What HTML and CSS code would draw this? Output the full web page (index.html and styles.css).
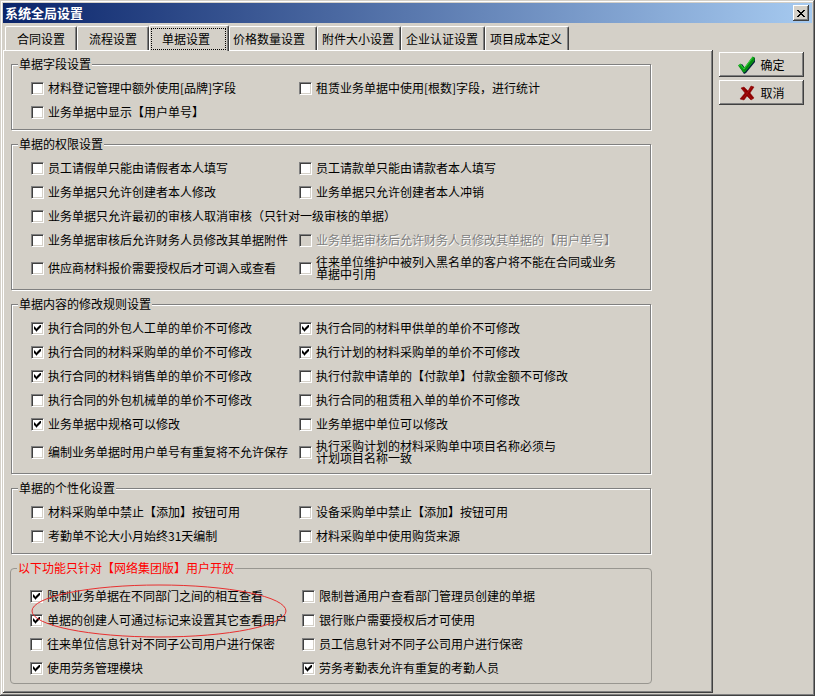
FILE: index.html
```html
<!DOCTYPE html>
<html lang="zh-CN">
<head>
<meta charset="utf-8">
<title>系统全局设置</title>
<link rel="stylesheet" href="styles.css">
</head>
<body>
<main class="window">
  <header class="titlebar">
    <h1 class="title">系统全局设置</h1>
    <button class="close" type="button" aria-label="关闭">
      <svg width="8" height="7" viewBox="0 0 8 7" shape-rendering="crispEdges"><path d="M0 0h2v1h1v1h2v-1h1v-1h2v1h-1v1h-1v1h-1v1h1v1h1v1h1v1h-2v-1h-1v-1h-2v1h-1v1h-2v-1h1v-1h1v-1h1v-1h-1v-1h-1v-1h-1z"/></svg>
    </button>
  </header>
  <form class="content">
    <div class="pages">
      <div class="tabs" role="tablist">
        <button class="tab tab-wide" type="button" role="tab">合同设置</button>
        <button class="tab tab-wide" type="button" role="tab">流程设置</button>
        <button class="tab tab-selected" type="button" role="tab" aria-selected="true"><span class="focus">单据设置</span></button>
        <button class="tab tab-after" type="button" role="tab">价格数量设置</button>
        <button class="tab" type="button" role="tab">附件大小设置</button>
        <button class="tab" type="button" role="tab">企业认证设置</button>
        <button class="tab" type="button" role="tab">项目成本定义</button>
      </div>
      <div class="panel" role="tabpanel">
        <fieldset class="group">
          <legend>单据字段设置</legend>
          <div class="options">
            <label class="option"><input type="checkbox"><span>材料登记管理中额外使用[品牌]字段</span></label>
            <label class="option"><input type="checkbox"><span>租赁业务单据中使用[根数]字段，进行统计</span></label>
            <label class="option"><input type="checkbox"><span>业务单据中显示【用户单号】</span></label>
          </div>
        </fieldset>
        <fieldset class="group">
          <legend>单据的权限设置</legend>
          <div class="options">
            <label class="option"><input type="checkbox"><span>员工请假单只能由请假者本人填写</span></label>
            <label class="option"><input type="checkbox"><span>员工请款单只能由请款者本人填写</span></label>
            <label class="option"><input type="checkbox"><span>业务单据只允许创建者本人修改</span></label>
            <label class="option"><input type="checkbox"><span>业务单据只允许创建者本人冲销</span></label>
            <label class="option option-full"><input type="checkbox"><span>业务单据只允许最初的审核人取消审核（只针对一级审核的单据）</span></label>
            <label class="option"><input type="checkbox"><span>业务单据审核后允许财务人员修改其单据附件</span></label>
            <label class="option option-off"><input type="checkbox" disabled><span>业务单据审核后允许财务人员修改其单据的【用户单号】</span></label>
            <label class="option option-tall"><input type="checkbox"><span>供应商材料报价需要授权后才可调入或查看</span></label>
            <label class="option option-tall"><input type="checkbox"><span>往来单位维护中被列入黑名单的客户将不能在合同或业务<br>单据中引用</span></label>
          </div>
        </fieldset>
        <fieldset class="group">
          <legend>单据内容的修改规则设置</legend>
          <div class="options">
            <label class="option"><input type="checkbox" checked><span>执行合同的外包人工单的单价不可修改</span></label>
            <label class="option"><input type="checkbox" checked><span>执行合同的材料甲供单的单价不可修改</span></label>
            <label class="option"><input type="checkbox" checked><span>执行合同的材料采购单的单价不可修改</span></label>
            <label class="option"><input type="checkbox" checked><span>执行计划的材料采购单的单价不可修改</span></label>
            <label class="option"><input type="checkbox" checked><span>执行合同的材料销售单的单价不可修改</span></label>
            <label class="option"><input type="checkbox"><span>执行付款申请单的【付款单】付款金额不可修改</span></label>
            <label class="option"><input type="checkbox"><span>执行合同的外包机械单的单价不可修改</span></label>
            <label class="option"><input type="checkbox"><span>执行合同的租赁租入单的单价不可修改</span></label>
            <label class="option"><input type="checkbox" checked><span>业务单据中规格可以修改</span></label>
            <label class="option"><input type="checkbox"><span>业务单据中单位可以修改</span></label>
            <label class="option option-tall"><input type="checkbox"><span>编制业务单据时用户单号有重复将不允许保存</span></label>
            <label class="option option-tall"><input type="checkbox"><span>执行采购计划的材料采购单中项目名称必须与<br>计划项目名称一致</span></label>
          </div>
        </fieldset>
        <fieldset class="group">
          <legend>单据的个性化设置</legend>
          <div class="options">
            <label class="option"><input type="checkbox"><span>材料采购单中禁止【添加】按钮可用</span></label>
            <label class="option"><input type="checkbox"><span>设备采购单中禁止【添加】按钮可用</span></label>
            <label class="option"><input type="checkbox"><span>考勤单不论大小月始终31天编制</span></label>
            <label class="option"><input type="checkbox"><span>材料采购单中使用购货来源</span></label>
          </div>
        </fieldset>
        <fieldset class="group group-edition">
          <legend>以下功能只针对【网络集团版】用户开放</legend>
          <div class="options">
            <label class="option"><input type="checkbox" checked><span>限制业务单据在不同部门之间的相互查看</span></label>
            <label class="option"><input type="checkbox"><span>限制普通用户查看部门管理员创建的单据</span></label>
            <label class="option"><input type="checkbox" checked><span>单据的创建人可通过标记来设置其它查看用户</span></label>
            <label class="option"><input type="checkbox"><span>银行账户需要授权后才可使用</span></label>
            <label class="option"><input type="checkbox"><span>往来单位信息针对不同子公司用户进行保密</span></label>
            <label class="option"><input type="checkbox"><span>员工信息针对不同子公司用户进行保密</span></label>
            <label class="option"><input type="checkbox" checked><span>使用劳务管理模块</span></label>
            <label class="option"><input type="checkbox" checked><span>劳务考勤表允许有重复的考勤人员</span></label>
          </div>
          <svg class="mark" width="256" height="54" viewBox="0 0 256 54" aria-hidden="true"><ellipse cx="128" cy="27" rx="127" ry="26"/></svg>
        </fieldset>
      </div>
    </div>
    <div class="actions">
      <button class="action" type="button">
        <svg width="18" height="18" viewBox="0 0 18 18"><path d="M1 10l3-2 3 4L15 1l2 1v4L8 17l-2 1z" fill="#06243a"/><path d="M0 9.500l2.500-2 3.500 4.500L14.500 0.500l2 1v3L7 16l-1.500 0.500z" fill="#0a9c14"/><path d="M1 9.500l1.500-1 3.500 4.500L14.500 1.500" fill="none" stroke="#35d03c"/><path d="M6.500 14.500L15.500 3.500" fill="none" stroke="#067a10"/></svg>
        <span>确定</span>
      </button>
      <button class="action" type="button">
        <svg width="18" height="18" viewBox="0 0 18 18"><path d="M3 4l3-1 4 4 3-5 3 1-4 6 4 5-3 2-4-4-3 4-4-1 5-6z" fill="#8c0000" stroke="#8c0000" stroke-width="0.500"/><path d="M4 4.500l6.500 6.500 3.500 4M14 3L5 14.500" fill="none" stroke="#a81010"/></svg>
        <span>取消</span>
      </button>
    </div>
  </form>
</main>
</body>
</html>
```
FILE: styles.css
```css
:root {
  --face: #d4d0c8;
  --shade: #808080;
  --dark: #404040;
}

* {
  box-sizing: border-box;
}

body {
  margin: 0;
  background: var(--face);
  color: #000;
  font: 12px/14px "Noto Sans CJK SC", sans-serif;
}

button {
  padding: 0;
  border: 0;
  background: var(--face);
  color: inherit;
  font: inherit;
}

.window {
  display: flex;
  flex-direction: column;
  min-height: 100vh;
  padding: 3px;
  background: var(--face);
  box-shadow: inset -1px -1px var(--dark), inset 1px 1px var(--face), inset -2px -2px var(--shade), inset 2px 2px #fff;
}

.titlebar {
  display: flex;
  align-items: center;
  justify-content: space-between;
  height: 20px;
  padding: 0 3px 0 2px;
  background: linear-gradient(to right, #0a246a, #a6caf0);
}

.title {
  margin: 0;
  color: #fff;
  font-size: 13px;
  line-height: 18px;
}

.close {
  display: flex;
  align-items: center;
  justify-content: center;
  width: 16px;
  height: 16px;
}

.close,
.action {
  box-shadow: inset -1px -1px var(--dark), inset 1px 1px #fff, inset -2px -2px var(--shade);
}

.content {
  display: flex;
  flex: 1;
}

.pages {
  display: flex;
  flex: 1;
  flex-direction: column;
}

.tabs {
  display: flex;
  align-items: flex-end;
  height: 27px;
  padding-left: 2px;
}

.tab {
  height: 24px;
  padding: 0 6px 0 4px;
  border: 1px solid #fff;
  border-right-color: var(--dark);
  border-bottom: 0;
  border-radius: 2px 2px 0 0;
  box-shadow: inset -1px 0 var(--shade);
  line-height: 23px;
  white-space: nowrap;
}

.tab-wide {
  padding: 0 11px;
}

.tab-selected {
  z-index: 1;
  height: 26px;
  margin-bottom: -1px;
  padding: 1px 2px 1px 1px;
}

.focus {
  display: block;
  padding: 0 15px 0 10px;
  border: 1px dotted #000;
  line-height: 20px;
}

.tab-after {
  padding: 0 11px 0 3px;
}

.panel {
  display: flex;
  flex: 1;
  flex-direction: column;
  gap: 7px;
  padding: 7px 62px 9px 8px;
  box-shadow: inset -1px -1px var(--dark), inset 1px 1px #fff, inset -2px -2px var(--shade);
}

.group {
  position: relative;
  min-width: 0;
  margin: 0;
  padding: 5px 0 5px 19px;
  border: 1px solid var(--shade);
  box-shadow: inset 1px 1px #fff, 1px 1px #fff;
}

.group legend {
  margin-left: -13px;
  padding: 0 1px;
  background: var(--face);
}

.group-edition {
  margin: 0 -1px;
  padding: 9px 0 3px 19px;
  border-color: #989690;
  border-radius: 4px;
  box-shadow: none;
}

.group-edition legend {
  color: #f00;
}

.options {
  display: grid;
  grid-template-columns: 268px 1fr;
}

.group-edition .options {
  grid-template-columns: 272px 1fr;
}

.option {
  display: flex;
  align-items: center;
  gap: 4px;
  height: 24px;
  line-height: 12px;
  white-space: nowrap;
}

.option-full {
  grid-column: 1 / -1;
}

.option-tall {
  height: 32px;
}

.option-off {
  color: var(--shade);
  text-shadow: 1px 1px #fff;
}

.option input {
  flex: none;
  width: 13px;
  height: 13px;
  margin: 0;
  padding: 2px;
  appearance: none;
  border: 1px solid;
  border-color: var(--shade) #fff #fff var(--shade);
  background: #fff;
  box-shadow: inset 1px 1px var(--dark), inset -1px -1px var(--face);
}

.option input:disabled {
  background: var(--face);
}

.option input:checked::before {
  content: "";
  display: block;
  width: 7px;
  height: 7px;
  background: #000;
  clip-path: polygon(0 2px, 1px 2px, 1px 3px, 2px 3px, 2px 4px, 3px 4px, 3px 3px, 4px 3px, 4px 2px, 5px 2px, 5px 1px, 6px 1px, 6px 0, 7px 0, 7px 3px, 6px 3px, 6px 4px, 5px 4px, 5px 5px, 4px 5px, 4px 6px, 3px 6px, 3px 7px, 2px 7px, 2px 6px, 1px 6px, 1px 5px, 0 5px);
}

.mark {
  position: absolute;
  top: 9px;
  left: 20px;
  pointer-events: none;
}

.mark ellipse {
  fill: none;
  stroke: #e83030;
}

.actions {
  display: flex;
  flex-direction: column;
  gap: 3px;
  width: 99px;
  padding: 29px 8px 0 6px;
}

.action {
  display: flex;
  align-items: center;
  justify-content: center;
  gap: 4px;
  height: 25px;
}
```
